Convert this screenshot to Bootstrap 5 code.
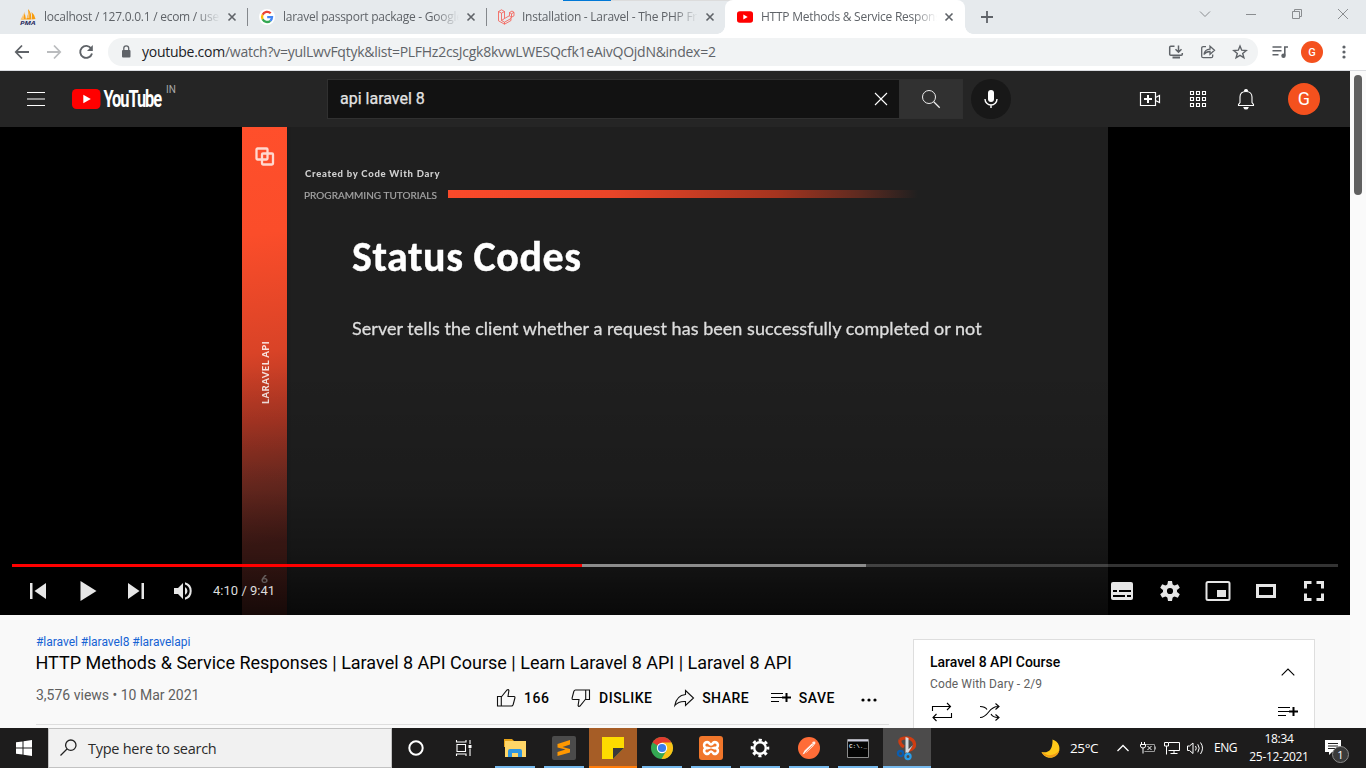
<!DOCTYPE html>
<html lang="en">
<head>
<meta charset="utf-8">
<meta name="viewport" content="width=device-width, initial-scale=1">
<title>HTTP Methods &amp; Service Responses</title>
<link href="https://cdn.jsdelivr.net/npm/bootstrap@5.3.0/dist/css/bootstrap.min.css" rel="stylesheet">
<style>
html,body{height:768px;overflow:hidden}
body{font-family:Roboto,"Liberation Sans",sans-serif;background:#f9f9f9;color:#030303;line-height:1.2}
svg{display:block;flex:none;overflow:visible}
.ui{font-family:"Open Sans","Noto Sans",sans-serif}
.cell{flex:none;display:flex;align-items:center;justify-content:center}
.c32{width:32px}.c44{width:44px}.c46{width:46px}.c47{width:47px}.c48{width:48px}.c52{width:52px}.c72{width:72px}
/* tab strip */
.tabstrip{height:34px;background:#e6eaed;position:relative;padding-left:8px}
.btab{width:239px;height:34px;padding:0 7px 0 12px;font-size:12px;letter-spacing:-.25px;color:#5f6368;position:relative}
.btab .ttl{width:176px;margin-left:8px;overflow:hidden;white-space:nowrap;-webkit-mask-image:linear-gradient(90deg,#000 86%,transparent);mask-image:linear-gradient(90deg,#000 86%,transparent)}
.btab.sep::after{content:"";position:absolute;right:-1px;top:8px;height:18px;width:1px;background:#84888c}
.btab.on{background:#fff;border-radius:8px 8px 0 0;width:240px;padding-right:8px}
.btab.on::before,.btab.on::after{content:"";position:absolute;bottom:0;width:8px;height:8px}
.btab.on::before{left:-8px;background:radial-gradient(circle at 0 0,transparent 7.5px,#fff 8px)}
.btab.on::after{right:-8px;background:radial-gradient(circle at 100% 0,transparent 7.5px,#fff 8px)}
.loadbar{position:absolute;left:563px;top:0;width:241px;height:1px;background:linear-gradient(90deg,#0078d7 48px,#dcdcdc 48px)}
.winbtns{height:28px}
.toolbar{height:37px;background:#fff;border-bottom:1px solid #dadce0;padding-left:6px;padding-right:6px}
.omni{height:28px;border-radius:14px;background:#f1f3f4;width:1150px;margin-left:6px;padding:0 2px 0 10px}
.url{font-size:14px;letter-spacing:-.26px;color:#5f6368;white-space:nowrap}
.url b{font-weight:400;color:#202124}
.queue{width:38px;padding-left:6px}
.av{border-radius:50%;background:#f4511e;color:#fff;flex:none}
.av-s{width:22px;height:22px;font:500 11px Roboto,sans-serif}
.av-l{width:32px;height:32px;margin:0 6px 0 18px;font-size:18px}
/* page */
.view{height:657px}
.scroller{width:16px;background:#fafafa;padding:4px 0 0 4px}
.scroller div{width:8px;height:120px;border-radius:4px;background:#606060}
.mast{height:56px;background:#252525;color:#fff}
.region{font-size:10px;color:#aaa;margin:-19px 0 0 4px;width:161px}
.sbox{width:572px;height:40px;background:#121212;border:1px solid #303030;border-right:0;padding:0 6px 0 12px;font-size:16px;color:#e3e3e3;-webkit-text-stroke:.25px #e3e3e3}
.sbtn{width:64px;height:40px;background:#313131;border:1px solid #303030}
.mic{width:40px;height:40px;border-radius:50%;background:#181818;margin-left:8px}
.player{height:488px;background:#000;position:relative}
.slide{width:866px;height:488px;margin-left:242px;background:#1f1f1f;font-family:Lato,sans-serif;overflow:hidden}
.band{width:45px;height:488px;background:linear-gradient(172deg,#ff4f2b 0,#fb4d2a 22%,#d94327 46%,#a83523 60%,#702b21 73%,#4c1f1a 85%,#4c201b 100%);box-shadow:1px 0 2px #171c20;padding-top:20px;color:#fff;flex:none}
.vert{writing-mode:vertical-rl;transform:rotate(180deg);font-size:9.5px;font-weight:900;letter-spacing:.45px;margin:173px 0 0 2px;height:66px;text-align:center;white-space:nowrap;opacity:.85;filter:blur(.5px)}
.num{margin-top:167px;font-size:12px;font-weight:700;opacity:.65;filter:blur(.6px)}
.soft{filter:blur(.55px)}
.by{font-size:9.5px;font-weight:900;letter-spacing:.73px;color:#cfcfcf;margin:41px 0 0 18px;line-height:12px;white-space:nowrap}
.prog{height:12px;margin:9px 0 0 17px;font-size:10px;letter-spacing:.03px;color:#a4a4a4;line-height:12px;white-space:nowrap;-webkit-text-stroke:.2px #a4a4a4}
.prog span{width:144px}
.prog i{width:470px;height:8px;margin-top:-3px;background:linear-gradient(90deg,#fa4a2a 0,#e94528 35%,#a5341f 70%,#5c2a20 88%,#1f1f1f 100%)}
.big{font:700 42px/50px Carlito,"Open Sans",sans-serif;letter-spacing:.55px;color:#fff;margin:31px 0 0 65px;white-space:nowrap;-webkit-text-stroke:.4px #fff}
.tell{font-size:18px;letter-spacing:.04px;line-height:24px;color:#dedede;margin:34px 0 0 65px;white-space:nowrap;-webkit-text-stroke:.3px #dedede}
.shade{position:absolute;left:0;right:0;bottom:0;height:250px;background:linear-gradient(transparent,rgba(0,0,0,.12) 50%,rgba(0,0,0,.32) 75%,rgba(0,0,0,.7))}
.ctl{position:absolute;left:12px;right:12px;bottom:0;height:51px;color:#e6e6e6}
.ctlrow{height:48px}
.bar{height:3px;background:linear-gradient(90deg,red 570px,#8c8c8c 570px,#8c8c8c 854px,rgba(255,255,255,.2) 854px)}
.time{font-size:13px;color:#ddd;letter-spacing:.02px;margin-left:7px}
/* details */
.info{width:853px;margin-left:36px;border-bottom:1px solid #dedede;height:110px}
.tags{font-size:12px;letter-spacing:-.03px;color:#1663d4;line-height:14px;margin-top:20px}
.vtitle{font-size:18px;line-height:24px;font-weight:400;letter-spacing:0;white-space:nowrap;margin:2px 0 0 -.5px}
.meta{height:24px;margin-top:11px;font-size:14px;color:#606060}
.meta>span{margin-top:-5px}
.acts{font-size:14px;font-weight:500;letter-spacing:.5px;color:#030303}
.acts span{margin:0 21.7px 0 8px}
.acts span:nth-of-type(4){margin-right:26px}
.acts svg:last-child{margin-right:12px}
.plist{width:402px;height:89px;background:#fff;border:1px solid #dedede;border-bottom:0;margin:24px 0 0 24px;padding:14px 14px 0 16px}
.plist .fold{margin-top:-2px}
.ptitle{font-size:14px;font-weight:500;line-height:17px}
.psub{font-size:12px;letter-spacing:.12px;color:#606060;margin-top:6px;line-height:14px}
.picons{padding-top:9px}
/* taskbar */
.task{height:40px;background:#1d1c1c;color:#fff}
.find{width:344px;height:40px;background:#f1f1f1;border:1px solid #c2c2c2;color:#2b2b2b;font-size:14.5px;letter-spacing:-.26px;padding-left:11px}
.find span{padding:1px 0 0 10px}
.apps{margin-left:4px}
.app{width:48px;height:40px;margin-right:1px;position:relative}
.app::after{content:"";position:absolute;left:4px;width:40px;height:2px;bottom:0;background:#76b9ed}
.app.note{background:#a65d26}.app.note::after{left:0;width:48px;background:#ff7d0b}
.app.cur{background:#4c4b4b}.app.cur::after{left:0;width:48px}
.tray{margin-right:25px;font-size:12px}
.wx{font-size:13.5px;letter-spacing:-.4px;margin-left:10px;width:46px}
.t2{margin-left:10px}.t3{margin-left:8px}.t4{margin-left:7px}
.eng{margin-left:10px;letter-spacing:-.5px;width:27px}
.stamp{font-size:12px;letter-spacing:-.33px;line-height:18px;width:76px}
.bell2{margin-left:8px}
.nbadge{position:absolute;left:7px;top:6px;width:17px;height:17px;border-radius:50%;background:#3a3a3a;border:1px solid #8a8a8a;font-size:11px}
</style>
</head>
<body>
<div class="tabstrip d-flex ui">
 <div class="loadbar"></div>
 <div class="btab sep d-flex align-items-center">
  <svg width="16" height="16" viewBox="0 0 16 16"><path d="M1 10.500Q5 7 4.500 2.500L6 10.500zM6 10.500Q9 5 8 0q4 4 3 10.500zM11.500 10.500q1-4 0-7.500 3.500 3 4 7z" fill="#f89c0e"/><path d="M.5 10.500Q3 7 3.500 4L4 10.500zM9.300 9Q10 5 9 2l-2 7z" fill="#fbc675"/><text x="0" y="15.500" font-size="6" font-weight="700" font-style="italic" fill="#2b2e62" font-family="Open Sans" letter-spacing="0" textLength="15.500" lengthAdjust="spacingAndGlyphs">PMA</text></svg>
  <div class="ttl">localhost / 127.0.0.1 / ecom / users</div>
  <svg class="ms-auto" width="16" height="16" viewBox="0 0 16 16"><path d="M4.500 4.500l7 7M11.500 4.500l-7 7" stroke="#5f6368" stroke-width="1.600"/></svg>
 </div>
 <div class="btab sep d-flex align-items-center">
  <svg width="16" height="16" viewBox="0 0 16 16"><circle cx="8" cy="8" r="8" fill="#fff"/><g fill="none" stroke-width="2.300"><path d="M11.700 4.300A5 5 0 0 0 3.600 5.700" stroke="#ea4335"/><path d="M3.600 5.700a5 5 0 0 0 0 4.600" stroke="#fbbc05"/><path d="M3.600 10.300a5 5 0 0 0 7.700 1.500" stroke="#34a853"/><path d="M11.300 11.800A5 5 0 0 0 13 8.200H8.200" stroke="#4285f4"/></g></svg>
  <div class="ttl">laravel passport package - Google Search</div>
  <svg class="ms-auto" width="16" height="16" viewBox="0 0 16 16"><path d="M4.500 4.500l7 7M11.500 4.500l-7 7" stroke="#5f6368" stroke-width="1.600"/></svg>
 </div>
 <div class="btab d-flex align-items-center">
  <svg width="16" height="16" viewBox="0 0 16 16" fill="none" stroke="#f5574d" stroke-width=".8" stroke-linejoin="round"><path d="M.5 2.500L3.500.8l3 1.700v7l5-2.800V3.500l2.500-1.500 2 1.300v3.500l-3 1.700v3L6.500 15.200.5 11.800zM.5 2.500l3 1.700 3-1.700M3.500 4.200v7.300l3 1.700 6.500-3.700M3.500 11.500l3-2M11.500 6.700l1.500 1.800M11.500 3.500l2 1.300 2.500-1.500M13.500 4.800v3.500M6.500 13.200v2"/></svg>
  <div class="ttl">Installation - Laravel - The PHP Framework</div>
  <svg class="ms-auto" width="16" height="16" viewBox="0 0 16 16"><path d="M4.500 4.500l7 7M11.500 4.500l-7 7" stroke="#5f6368" stroke-width="1.600"/></svg>
 </div>
 <div class="btab on d-flex align-items-center">
  <svg width="16" height="16" viewBox="0 0 16 16"><rect y="2.300" width="16" height="11.500" rx="2.800" fill="red"/><path d="M6.300 5.500L10.700 8l-4.400 2.500z" fill="#fff"/></svg>
  <div class="ttl">HTTP Methods &amp; Service Responses</div>
  <svg class="ms-auto" width="16" height="16" viewBox="0 0 16 16"><path d="M4.500 4.500l7 7M11.500 4.500l-7 7" stroke="#5f6368" stroke-width="1.600"/></svg>
 </div>
 <div class="cell c44"><svg width="14" height="14" viewBox="0 0 14 14"><path d="M7 1v12M1 7h12" stroke="#5f6368" stroke-width="1.800"/></svg></div>
 <div class="winbtns d-flex ms-auto">
  <div class="cell c46"><svg width="12" height="12" viewBox="0 0 12 12" fill="none" stroke="#8a8d90"><path d="M1 3.500l5 5 5-5"/></svg></div>
  <div class="cell c46"><svg width="12" height="12" viewBox="0 0 12 12" fill="none" stroke="#8a8d90"><path d="M1 6.500h10"/></svg></div>
  <div class="cell c46"><svg width="12" height="12" viewBox="0 0 12 12" fill="none" stroke="#8a8d90"><path d="M1.500 3.500h7v7h-7zM3.500 3.500v-2h7v7h-2"/></svg></div>
  <div class="cell c46"><svg width="12" height="12" viewBox="0 0 12 12" fill="none" stroke="#8a8d90"><path d="M1 1l10 10M11 1L1 11"/></svg></div>
 </div>
</div>
<div class="toolbar ui d-flex align-items-center">
 <div class="cell c32"><svg width="16" height="16" viewBox="0 0 16 16" fill="none" stroke="#5f6368" stroke-width="1.800"><path d="M15 8H2M8 1.500L1.800 8 8 14.500"/></svg></div>
 <div class="cell c32"><svg width="16" height="16" viewBox="0 0 16 16" fill="none" stroke="#babcbe" stroke-width="1.800"><path d="M1 8h13M8 1.500L14.200 8 8 14.500"/></svg></div>
 <div class="cell c32"><svg width="16" height="16" viewBox="0 0 16 16" fill="none" stroke="#5f6368" stroke-width="1.900"><path d="M13.200 4.500A6 6 0 1 0 14 9.500"/><path d="M14.800 1v6H9z" fill="#5f6368" stroke="none"/></svg></div>
 <div class="omni d-flex align-items-center">
  <svg width="16" height="16" viewBox="0 0 16 16"><rect x="4" y="6" width="8.500" height="7.500" rx="1" fill="#5f6368"/><path d="M5.800 6.500V4.300a2.400 2.400 0 0 1 4.900 0v2.200" fill="none" stroke="#5f6368" stroke-width="1.300"/></svg>
  <div class="url ms-2 me-auto"><b>youtube.com</b>/watch?v=yulLwvFqtyk&amp;list=PLFHz2csJcgk8kvwLWESQcfk1eAivQOjdN&amp;index=2</div>
  <div class="cell c32"><svg width="16" height="16" viewBox="0 0 16 16" fill="none" stroke="#5f6368" stroke-width="1.500"><path d="M6.500 2.200H2.700q-1 0-1 1v7q0 1 1 1h10.600q1 0 1-1V9M10.500 1.500v6.500M7.500 5.300l3 3 3-3"/><path d="M4.500 13.500h7.500" stroke-width="2"/></svg></div>
  <div class="cell c32"><svg width="16" height="16" viewBox="0 0 16 16" fill="none" stroke="#5f6368" stroke-width="1.300"><path d="M6 2.700H3.200q-1.500 0-1.500 1.500v8q0 1.500 1.500 1.500h8q1.500 0 1.500-1.500V10.500M4 10.500q.5-5 6-5.300V2.200l4.500 4-4.500 4V7.500q-4 0-6 3z"/></svg></div>
  <div class="cell c32"><svg width="16" height="16" viewBox="0 0 16 16" fill="none" stroke="#5f6368" stroke-width="1.400"><path d="M8 2l1.700 4.200 4.500.3-3.500 2.900 1.200 4.400L8 11.300l-3.900 2.500 1.200-4.400L1.800 6.500l4.500-.3z"/></svg></div>
 </div>
 <div class="cell queue"><svg width="16" height="16" viewBox="0 0 16 16" fill="none" stroke="#5f6368" stroke-width="1.600"><path d="M.5 3h9M.5 6.800h9M.5 10.700h6M12.800 11.500V3H16"/><circle cx="11.500" cy="11.800" r="2.200" fill="#5f6368" stroke="none"/></svg></div>
 <div class="cell c32"><div class="av av-s cell">G</div></div>
 <div class="cell c32"><svg width="4" height="16" viewBox="0 0 4 16" fill="#5f6368"><circle cx="2" cy="3" r="1.600"/><circle cx="2" cy="8" r="1.600"/><circle cx="2" cy="13" r="1.600"/></svg></div>
</div>
<div class="view d-flex">
 <main class="flex-grow-1 overflow-hidden">
  <header class="mast d-flex align-items-center">
   <div class="cell c72"><svg width="24" height="24" viewBox="0 0 24 24"><path d="M3 5.500h18M3 12h18M3 18.500h18" stroke="#fff"/></svg></div>
   <svg width="90" height="20" viewBox="0 0 90 20"><rect width="28.500" height="20" rx="4.500" fill="red"/><path d="M11.300 5.800l7.500 4.200-7.500 4.200z" fill="#fff"/><text x="31.500" y="18.300" font-family="Roboto" font-weight="700" font-size="23" fill="#fff" transform="translate(31.500 0) scale(.715 1) translate(-31.500 0)" textLength="82">YouTube</text></svg>
   <div class="region">IN</div>
   <div class="sbox d-flex align-items-center justify-content-between"><span>api laravel 8</span><svg width="24" height="24" viewBox="0 0 24 24"><path d="M6 6l12 12M18 6L6 18" stroke="#fff" stroke-width="1.100"/></svg></div>
   <div class="sbtn cell"><svg width="24" height="24" viewBox="0 0 24 24" fill="none" stroke="#eee"><circle cx="10" cy="10" r="6.500"/><path d="M14.700 14.700l6 6" stroke-width="1.300"/></svg></div>
   <div class="mic cell"><svg width="24" height="24" viewBox="0 0 24 24"><rect x="9" y="3" width="6" height="12" rx="3" fill="#fff"/><path d="M6 12a6 6 0 0 0 12 0M12 18v3" stroke="#fff" stroke-width="1.400" fill="none"/></svg></div>
   <div class="d-flex ms-auto align-items-center me-4">
    <div class="cell c48"><svg width="24" height="24" viewBox="0 0 24 24" fill="none" stroke="#fff"><path d="M2.500 5.500h15v13h-15zM17.500 10.500l4-2v7l-4-2" stroke-width="1.200"/><path d="M10 8v8M6 12h8" stroke-width="2"/></svg></div>
    <div class="cell c48"><svg width="24" height="24" viewBox="0 0 24 24" fill="none" stroke="#fff" stroke-width="1.100"><path d="M4.500 4.500h3v3h-3zM10.500 4.500h3v3h-3zM16.500 4.500h3v3h-3zM4.500 10.500h3v3h-3zM10.500 10.500h3v3h-3zM16.500 10.500h3v3h-3zM4.500 16.500h3v3h-3zM10.500 16.500h3v3h-3zM16.500 16.500h3v3h-3z"/></svg></div>
    <div class="cell c48"><svg width="24" height="24" viewBox="0 0 24 24" fill="none" stroke="#fff" stroke-width="1.100"><path d="M4.500 18.500h15v-1L18 15.500V10c0-3-2-5.500-6-5.500S6 7 6 10v5.500l-1.500 2z"/><path d="M10 20.500h4q-.5 1.500-2 1.500t-2-1.500zM10.500 4q0-1.500 1.500-1.500T13.500 4z" fill="#fff"/></svg></div>
    <div class="av av-l cell">G</div>
   </div>
  </header>
  <section class="player">
   <div class="slide d-flex">
    <div class="band d-flex flex-column align-items-center"><svg class="soft" width="19" height="19" viewBox="0 0 19 19" fill="none" stroke="#ffd9cf" stroke-width="2.300"><rect x="1.500" y="1.500" width="11" height="11" rx="1"/><rect x="7" y="6.500" width="11" height="11" rx="1"/></svg><div class="vert">LARAVEL API</div><div class="num">6</div></div>
    <div class="flex-grow-1 soft">
     <div class="by">Created by Code With Dary</div>
     <div class="prog d-flex align-items-center"><span>PROGRAMMING TUTORIALS</span><i></i></div>
     <div class="big">Status Codes</div>
     <div class="tell">Server tells the client whether a request has been successfully completed or not</div>
    </div>
   </div>
   <div class="shade"></div>
   <div class="ctl">
    <div class="bar"></div>
    <div class="ctlrow d-flex align-items-center">
     <div class="cell c52"><svg width="16" height="16" viewBox="0 0 16 16" fill="#e6e6e6"><path d="M0 0h2.500v16H0zM16 0v16L4.500 8z"/></svg></div>
     <div class="cell c48"><svg width="16" height="20" viewBox="0 0 16 20" fill="#e6e6e6"><path d="M.5 0l16 10-16 10z"/></svg></div>
     <div class="cell c48"><svg width="16" height="16" viewBox="0 0 16 16" fill="#e6e6e6"><path d="M13.500 0H16v16h-2.500zM0 0l11.500 8L0 16z"/></svg></div>
     <div class="cell c46"><svg width="18" height="18" viewBox="0 0 18 18" fill="#e6e6e6"><path d="M0 6v6h4l5 5V1L4 6z"/><path d="M11 5a4.500 4.500 0 0 1 0 8z"/><path d="M11 .3v2.100a7 7 0 0 1 0 13.200v2.100a9 9 0 0 0 0-17.400z"/></svg></div>
     <div class="time">4:10 / 9:41</div>
     <div class="d-flex ms-auto">
      <div class="cell c48"><svg width="22" height="18" viewBox="0 0 22 18"><rect width="22" height="18" rx="2" fill="#e6e6e6"/><path d="M2 9h4M8 9h12M2 14h12M16 14h4" stroke="#000" stroke-width="2"/></svg></div>
      <div class="cell c48"><svg width="20" height="20" viewBox="0 0 20 20"><circle cx="10" cy="10" r="5.100" fill="none" stroke="#e6e6e6" stroke-width="4"/><path d="M8 0h4l.7 4H7.300zM8 20h4l.7-4H7.300zM.2 6.700l2-3.500L6 4.700 3.300 9.300zM19.800 13.300l-2 3.500-3.800-1.500 2.700-4.600zM19.800 6.700l-2-3.500L14 4.700l2.700 4.600zM.2 13.300l2 3.500L6 15.300l-2.700-4.600z" fill="#e6e6e6"/></svg></div>
      <div class="cell c48"><svg width="26" height="20" viewBox="0 0 26 20"><rect x="1.500" y="1" width="23" height="18" rx="1.500" fill="none" stroke="#e6e6e6" stroke-width="2"/><rect x="12" y="9" width="9" height="7" fill="#e6e6e6"/></svg></div>
      <div class="cell c48"><svg width="20" height="14" viewBox="0 0 20 14"><rect x="1.500" y="1.500" width="17" height="11" fill="none" stroke="#e6e6e6" stroke-width="3"/></svg></div>
      <div class="cell c48"><svg width="20" height="20" viewBox="0 0 20 20"><path d="M1.500 7.500v-6h6M12.500 1.500h6v6M18.500 12.500v6h-6M7.500 18.500h-6v-6" fill="none" stroke="#e6e6e6" stroke-width="3"/></svg></div>
     </div>
    </div>
   </div>
  </section>
  <div class="d-flex">
   <div class="info">
    <div class="tags">#laravel #laravel8 #laravelapi</div>
    <h1 class="vtitle">HTTP Methods &amp; Service Responses | Laravel 8 API Course | Learn Laravel 8 API | Laravel 8 API</h1>
    <div class="meta d-flex align-items-center"><span>3,576 views • 10 Mar 2021</span>
     <div class="acts d-flex align-items-center ms-auto">
      <svg width="20" height="20" viewBox="0 0 20 20" fill="none" stroke="#111" stroke-width="1.100"><path d="M1.500 8.500h3.800v9.500H1.500zM5.300 9L11 2q1.500-1 1.900.5L12 8.500h6.200q1 .3.700 1.500l-1.700 6.500q-.5 1.500-1.700 1.500H5.300"/></svg><span>166</span>
      <svg width="20" height="20" viewBox="0 0 20 20" fill="none" stroke="#111" stroke-width="1.100"><path d="M18.500 11.500h-3.800V2h3.800zM14.700 11L9 18q-1.500 1-1.900-.5L8 11.500H1.800q-1-.3-.7-1.500l1.700-6.500Q3.300 2 4.500 2h10.200"/></svg><span>DISLIKE</span>
      <svg width="20" height="20" viewBox="0 0 20 20" fill="none" stroke="#111" stroke-width="1.100"><path d="M11.500 2.500l8 7.500-8 7.500v-4Q4.500 13 .8 17.500 2.500 7.500 11.500 6.500z"/></svg><span>SHARE</span>
      <svg width="20" height="20" viewBox="0 0 20 20"><path d="M0 5.500h12M0 9.500h12M0 13.500h8" stroke="#000"/><path d="M15.500 5v9M11 9.500h9" stroke="#000" stroke-width="2"/></svg><span>SAVE</span>
      <svg width="16" height="20" viewBox="0 0 16 20"><circle cx="2" cy="12" r="1.600"/><circle cx="8" cy="12" r="1.600"/><circle cx="14" cy="12" r="1.600"/></svg>
     </div>
    </div>
   </div>
   <aside class="plist">
    <div class="d-flex justify-content-between align-items-center"><div><div class="ptitle">Laravel 8 API Course</div><div class="psub">Code With Dary - 2/9</div></div><svg class="fold" width="24" height="24" viewBox="0 0 24 24"><path d="M5.700 15.300L12 9l6.300 6.300" fill="none" stroke="#000" stroke-width="1.100"/></svg></div>
    <div class="picons d-flex">
     <svg width="24" height="24" viewBox="0 0 24 24" fill="none" stroke="#000" stroke-width="1.100"><path d="M2.500 11V6.500h18M17 3l3.500 3.500L17 10M21.500 13v4.500H3M6.500 14L3 17.500 6.500 21"/></svg>
     <svg class="ms-4" width="24" height="24" viewBox="0 0 24 24" fill="none" stroke="#000" stroke-width="1.100"><path d="M2 6.500q5 0 7 3M2 17.500c9 0 8-11 18-11M13 14q2 3.500 7 3.500M17.500 3.500l3.500 3-3.500 3M17.500 14.500l3.500 3-3.500 3"/></svg>
     <svg class="ms-auto" width="24" height="24" viewBox="0 0 24 24"><path d="M2 7.500h12M2 11.500h12M2 15.500h8" stroke="#000"/><path d="M17.500 7v9M13 11.500h9" stroke="#000" stroke-width="2"/></svg>
    </div>
   </aside>
  </div>
 </main>
 <div class="scroller"><div></div></div>
</div>
<footer class="task ui d-flex align-items-center">
 <div class="cell c48"><svg width="16" height="16" viewBox="0 0 16 16" fill="#fff"><path d="M0 2.300L6.500 1.400v6.100H0zM7.500 1.200L16 0v7.500H7.500zM0 8.500h6.500v6.100L0 13.700zM7.500 8.500H16V16l-8.500-1.200z"/></svg></div>
 <div class="find d-flex align-items-center"><svg width="18" height="18" viewBox="0 0 18 18" fill="none" stroke="#222" stroke-width="1.300"><circle cx="10.800" cy="6.200" r="5.200"/><path d="M7 10l-6.500 6.500"/></svg><span>Type here to search</span></div>
 <div class="cell c48"><svg width="16" height="16" viewBox="0 0 16 16"><circle cx="8" cy="8" r="6.700" fill="none" stroke="#fff" stroke-width="2"/></svg></div>
 <div class="cell c47"><svg width="18" height="16" viewBox="0 0 18 16" fill="none" stroke="#fff" stroke-width="1.100"><path d="M2 4.500h8.500v7H2zM1.500 0v2h9.500V0M1.500 16v-2h9.500v2M15 0v4M15 8.500V16"/><path d="M13.500 5h3v3h-3z" fill="#fff" stroke="none"/></svg></div>
 <div class="apps d-flex">
 <div class="app cell"><svg width="24" height="22" viewBox="0 0 24 22"><path d="M1 2h8l2 2h12v6H1z" fill="#e8a317"/><path d="M2 4h21v16H2z" fill="#ffd667"/><path d="M5 20v-6q0-2 2-2h10q2 0 2 2v6h-4v-4H9v4z" fill="#2f96e0"/></svg></div>
 <div class="app cell"><svg width="24" height="24" viewBox="0 0 24 24"><rect width="24" height="24" rx="2" fill="#4b4b4b"/><path d="M5.500 8L18 4v4.500L10.500 11 18 13v3.500L5.500 20v-4l8-2.500-8-2z" fill="#ff9800"/></svg></div>
 <div class="app note cell"><svg width="22" height="22" viewBox="0 0 22 22"><path d="M0 0h22v11L11 22H0z" fill="#fddb00"/><path d="M11 11h11L11 22z" fill="#39393b"/></svg></div>
 <div class="app cell"><svg width="22" height="22" viewBox="0 0 22 22"><circle cx="11" cy="11" r="11" fill="#34a853"/><path d="M11 11L1.500 5.500A11 11 0 0 1 20.500 5.500z" fill="#e33b2e"/><path d="M20.500 5.500A11 11 0 0 1 10.500 22L15.500 13.500 11 5.500z" fill="#fbc116"/><circle cx="11" cy="11" r="5.200" fill="#fff"/><circle cx="11" cy="11" r="4.100" fill="#3b7ded"/></svg></div>
 <div class="app cell"><svg width="24" height="24" viewBox="0 0 24 24"><rect width="24" height="24" rx="3" fill="#f0762b"/><path d="M9 12a3 3 0 1 1 .5-5.500Q11 8.500 12 8.500t2.500-2A3 3 0 1 1 15 12a3 3 0 1 1-.5 5.500Q13 15.500 12 15.500t-2.500 2A3 3 0 1 1 9 12z" fill="none" stroke="#fff" stroke-width="2.600"/></svg></div>
 <div class="app cell"><svg width="20" height="20" viewBox="0 0 20 20" fill="none" stroke="#fff"><circle cx="10" cy="10" r="5.800" stroke-width="2.400"/><circle cx="10" cy="10" r="8" stroke-width="2.600" stroke-dasharray="3.142 3.142" stroke-dashoffset="1.571"/></svg></div>
 <div class="app cell"><svg width="22" height="22" viewBox="0 0 22 22"><circle cx="11" cy="11" r="11" fill="#ff6c37"/><path d="M4.500 17.500l2-4 7.500-7 2 2-7.500 7zM14 6q1-2 3.300-1.200Q18 7 16 8z" fill="#fff" opacity=".9"/><path d="M7 16l7.500-7.500" stroke="#ff6c37" stroke-width=".7"/></svg></div>
 <div class="app cell"><svg width="22" height="19" viewBox="0 0 22 19"><path d="M.5.500h21v18H.5z" fill="#050505" stroke="#8c8c8c"/><path d="M1 1.500h20" stroke="#ccd" stroke-width="2"/><text x="2" y="8.500" font-size="6" font-weight="700" fill="#ddd" font-family="Liberation Mono" letter-spacing="0">C:\._</text></svg></div>
 <div class="app cur cell"><svg width="22" height="24" viewBox="0 0 22 24"><path d="M4 3.500Q9 1 14 2.500 19.500 5 18.300 10.500 16 14.500 11 14.500M4 3.500Q3 8 8 11" fill="none" stroke="#cf3d12" stroke-width="3.200"/><path d="M9.500 1l3 1v13l-3 2zM17 9l-5 8-2.500-1z" fill="#d5dade"/><circle cx="4.500" cy="17.500" r="2.600" fill="none" stroke="#0a5db0" stroke-width="2.200"/><circle cx="12" cy="20.500" r="2.600" fill="none" stroke="#2a9de8" stroke-width="2.200"/></svg></div>
 </div>
 <div class="d-flex ms-auto align-items-center tray">
  <svg width="19" height="19" viewBox="0 0 19 19"><path d="M11.500 0.500A9.300 9.300 0 1 1 .5 13Q12 15 11.500 .5z" fill="#ffc91a"/><path d="M12 18q5.500-2 6.500-7-4 6-12 5l-6-3q3 6 11.500 5z" fill="#f09a18"/></svg>
  <span class="wx">25°C</span>
  <svg class="t1" width="14" height="14" viewBox="0 0 14 14"><path d="M1.500 10L7 4.500l5.500 5.500" fill="none" stroke="#fff" stroke-width="1.300"/></svg>
  <svg class="t2" width="16" height="14" viewBox="0 0 16 14" fill="none" stroke="#fff"><path d="M5 3.500h9.500v7H4.500M15.500 5.500v3" stroke="#9a9a9a"/><path d="M1.500 1v2M4.500 1v2M.5 3.500h5v1.500q0 2-2.500 2t-2.500-2zM3 7v5.500M7.500 5l4 4M11.500 5l-4 4"/></svg>
  <svg class="t3" width="16" height="14" viewBox="0 0 16 14" fill="none" stroke="#fff"><path d="M5 1.500h10.500v8H4.500M10 9.500v3M6.500 12.500h7M.5 1.500h4v3.500h-4zM2.500 5v8.500"/></svg>
  <svg class="t4" width="17" height="14" viewBox="0 0 17 14" fill="none" stroke="#fff"><path d="M.5 5v4.500h2l3.500 3V2L2.500 5zM8.500 5q1.500 2 0 4.500M10.800 3.300q2.800 3.700 0 8M13.500 1.500q4 5.500 0 11.500"/></svg>
  <span class="eng">ENG</span>
  <div class="stamp text-center">18:34<br>25-12-2021</div>
  <div class="position-relative bell2"><svg width="16" height="16" viewBox="0 0 16 16"><path d="M0 0h16v12H7l-3 3v-3H0z" fill="#fff"/><path d="M3 3.500h10M3 6h10M3 8.500h7" stroke="#222"/></svg><span class="nbadge cell">1</span></div>
 </div>
</footer>
<script src="https://cdn.jsdelivr.net/npm/bootstrap@5.3.0/dist/js/bootstrap.bundle.min.js"></script>
</body>
</html>
